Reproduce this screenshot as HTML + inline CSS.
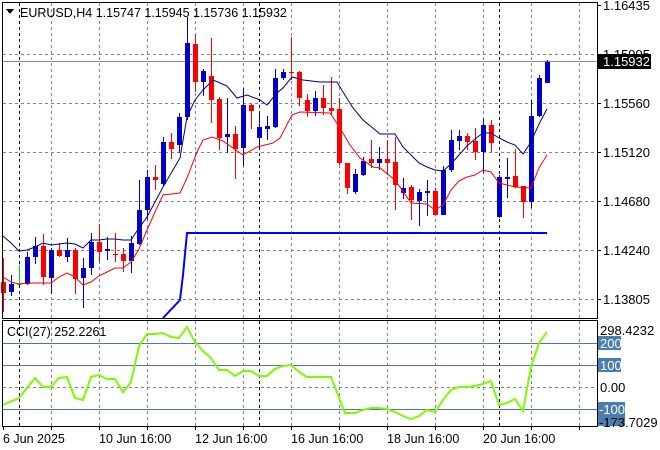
<!DOCTYPE html>
<html><head><meta charset="utf-8"><style>
html,body{margin:0;padding:0;background:#fff;width:660px;height:450px;overflow:hidden}
svg{display:block}
text{font-family:"Liberation Sans",sans-serif;font-size:12.5px;fill:#000}
.p{font-size:13px}
</style></head><body>
<svg id="s" width="660" height="450" viewBox="0 0 660 450" shape-rendering="crispEdges">
<rect width="660" height="450" fill="#fff"/>
<g stroke="#7a8290" stroke-dasharray="3,3" stroke-width="1">
<line x1="3" y1="54.5" x2="597" y2="54.5"/><line x1="3" y1="103.5" x2="597" y2="103.5"/>
<line x1="3" y1="152.5" x2="597" y2="152.5"/><line x1="3" y1="201.5" x2="597" y2="201.5"/>
<line x1="3" y1="250.5" x2="597" y2="250.5"/><line x1="3" y1="299.5" x2="597" y2="299.5"/>
<line x1="3" y1="387.5" x2="597" y2="387.5"/>
</g>
<g id="vg" stroke="#7a8290" stroke-dasharray="3,3"></g>
<line x1="3" y1="61.5" x2="597" y2="61.5" stroke="#8a8f96"/>
<g stroke="#4a76a8"><line x1="3" y1="343.5" x2="597" y2="343.5"/><line x1="3" y1="365.5" x2="597" y2="365.5"/><line x1="3" y1="409.5" x2="597" y2="409.5"/></g>
<g id="c"></g>
<polyline fill="none" stroke="#000080" shape-rendering="auto" points="3,236 11,243 19,251 27,250 35,247 43,243 51,245 59,244 67,243 75,244 83,248 91,240 99,240 107,239 115,239 123,240 131,240 139,228 147,217 163,187 180,158 187,117 195,100 203,90 213,80 227,86 237,98 247,95 260,100 267,105 277,93 283,88 292,77 303,80 320,82 337,82 343,92 353,108 363,120 380,134 395,134 403,147 411,155 419,163 427,167 435,170 443,171 451,164 459,155 467,146 475,139 483,133 491,133 499,138 507,142 515,145 523,154 531,142 539,124 547,109"/>
<polyline fill="none" stroke="#ff0000" shape-rendering="auto" points="3,277 11,282 19,284 27,283 35,283 51,283 59,277 67,273 75,277 83,285 91,282 99,276 107,272 115,268 123,268 131,262 139,249 147,230 155,212 163,195 180,193 187,178 197,152 203,140 212,137 223,141 243,155 257,147 273,143 280,138 292,115 300,112 330,113 340,128 350,145 360,158 373,167 380,168 395,180 411,203 427,204 435,210 443,205 451,190 459,181 467,177 475,175 483,170 491,172 499,183 515,187 531,188 539,168 547,155"/>
<polyline fill="none" stroke="#0000ff" stroke-width="2" shape-rendering="auto" points="163,318 180,300 183,275 187,233 547,233"/>
<polyline fill="none" stroke="#7cfc00" stroke-width="2" shape-rendering="auto" points="3,405 19,398 35,378 43,387 51,387 59,378 67,377 75,398 83,400 91,377 99,375 107,379 115,379 123,392 131,382 139,346 147,334 155,334 163,333 171,337 179,338 187,327 195,342 203,351 211,358 219,370 227,370 235,376 243,371 251,371 259,376 267,376 275,369 283,366 291,365 299,372 307,377 315,377 331,377 345,413 355,413 363,410 371,408 379,408 387,409 395,412 403,416 411,419 419,416 427,410 435,412 443,400 451,390 459,387 467,387 475,386 483,384 491,381 499,405 507,403 515,399 523,411 531,367 539,343 547,332"/>
<g fill="none" stroke="#000"><rect x="2.5" y="2.5" width="595" height="316"/><rect x="2.5" y="320.5" width="595" height="106"/></g>
<g stroke="#000"><line x1="597" y1="5.5" x2="601" y2="5.5"/><line x1="597" y1="54.5" x2="601" y2="54.5"/><line x1="597" y1="103.5" x2="601" y2="103.5"/><line x1="597" y1="152.5" x2="601" y2="152.5"/><line x1="597" y1="201.5" x2="601" y2="201.5"/><line x1="597" y1="250.5" x2="601" y2="250.5"/><line x1="597" y1="299.5" x2="601" y2="299.5"/></g>
<text class="p" x="603" y="10">1.16435</text>
<text class="p" x="603" y="59">1.15995</text>
<rect x="598" y="54" width="53" height="15" fill="#000"/>
<text class="p" x="603" y="66" style="fill:#fff">1.15932</text>
<text class="p" x="603" y="108">1.15560</text>
<text class="p" x="603" y="157">1.15120</text>
<text class="p" x="603" y="206">1.14680</text>
<text class="p" x="603" y="255">1.14240</text>
<text class="p" x="603" y="304">1.13805</text>
<text class="p" x="600" y="335">298.4232</text>
<rect x="598" y="336" width="23" height="14" fill="#4a7eae"/><text class="p" x="600" y="348" style="fill:#fff">200</text>
<rect x="598" y="358" width="23" height="14" fill="#4a7eae"/><text class="p" x="600" y="370" style="fill:#fff">100</text>
<text class="p" x="600" y="392">0.00</text>
<rect x="598" y="402" width="27" height="14" fill="#4a7eae"/><text class="p" x="599" y="414" style="fill:#fff">-100</text>
<rect x="598" y="415" width="27" height="11" fill="#4a7eae"/>
<text class="p" x="599" y="427">-173.7029</text>
<path d="M6,9 L14,9 L10,14 Z" fill="#000"/>
<text x="20" y="17">EURUSD,H4  1.15747 1.15945 1.15736 1.15932</text>
<text x="7" y="336">CCI(27) 252.2261</text>
<g id="tk" stroke="#000"></g>
<text x="3" y="443">6 Jun 2025</text>
<text x="99" y="443">10 Jun 16:00</text>
<text x="195" y="443">12 Jun 16:00</text>
<text x="291" y="443">16 Jun 16:00</text>
<text x="387" y="443">18 Jun 16:00</text>
<text x="483" y="443">20 Jun 16:00</text>
</svg>
<script>
var N='http://www.w3.org/2000/svg';
function el(p,t,a){var e=document.createElementNS(N,t);for(var k in a)e.setAttribute(k,a[k]);p.appendChild(e);return e;}
var vg=document.getElementById('vg'),tk=document.getElementById('tk');
[51,99,147,195,243,291,339,387,435,483,531,579].forEach(function(x){el(vg,'line',{x1:x+.5,y1:3,x2:x+.5,y2:318});el(vg,'line',{x1:x+.5,y1:321,x2:x+.5,y2:426});});
[19,259,499].forEach(function(x){el(vg,'line',{x1:x+.5,y1:3,x2:x+.5,y2:318,stroke:'#000'});el(vg,'line',{x1:x+.5,y1:321,x2:x+.5,y2:426,stroke:'#000'});});
[3,51,99,147,195,243,291,339,387,435,483,531,579].forEach(function(x){el(tk,'line',{x1:x+.5,y1:426,x2:x+.5,y2:430});});
var d="r 282 293 258 312|b 284 292 275 296|g 284 284 265 285|b 257 284 252 285|b 246 257 237 264|r 246 277 234 285|b 250 278 248 294|r 250 256 243 257|b 250 257 238 262|r 250 279 248 294|b 268 278 258 308|b 242 268 233 275|r 242 252 224 262|b 249 251 237 260|r 254 254 233 262|r 254 261 248 272|b 243 261 236 273|b 210 244 180 245|b 177 210 170 220|r 177 180 165 190|b 142 184 137 186|r 142 149 133 159|b 117 145 113 153|b 43 117 17 120|r 44 82 35 92|b 71 82 69 96|r 76 100 38 123|r 99 138 97 150|b 134 137 98 153|r 134 149 126 179|b 105 148 88 166|r 105 111 104 129|b 127 138 111 148|b 126 129 116 140|b 78 127 69 128|b 72 78 69 80|r 72 72 37 80|r 72 98 71 106|r 100 111 94 117|b 98 111 91 116|r 98 108 85 115|r 108 111 77 115|r 109 163 98 165|r 163 188 163 194|b 174 192 169 194|b 161 175 157 176|r 159 163 140 168|b 159 163 147 170|r 159 163 140 175|r 162 185 137 210|b 188 193 178 199|r 187 200 185 220|b 192 201 189 226|b 191 193 180 216|r 191 215 188 215|b 170 215 166 215|b 140 170 130 172|b 136 141 130 150|r 136 142 133 150|r 141 152 128 160|b 125 152 119 173|r 125 143 120 152|b 177 217 175 218|b 177 179 158 198|r 176 187 149 188|r 186 202 186 218|b 116 202 100 208|b 78 116 75 117|b 62 83 60 83".split('|');
var g=document.getElementById('c');
d.forEach(function(s,i){var p=s.split(' '),x=3+8*i,c=p[0]=='r'?'#ff0000':(p[0]=='g'?'#00e000':'#0000c8');
var o=+p[1],cl=+p[2],h=+p[3],l=+p[4];
el(g,'rect',{x:x,y:h,width:1,height:Math.max(l-h,1),fill:c});
el(g,'rect',{x:x-2,y:o,width:5,height:Math.max(cl-o,1),fill:c});});
</script>
</body></html>
